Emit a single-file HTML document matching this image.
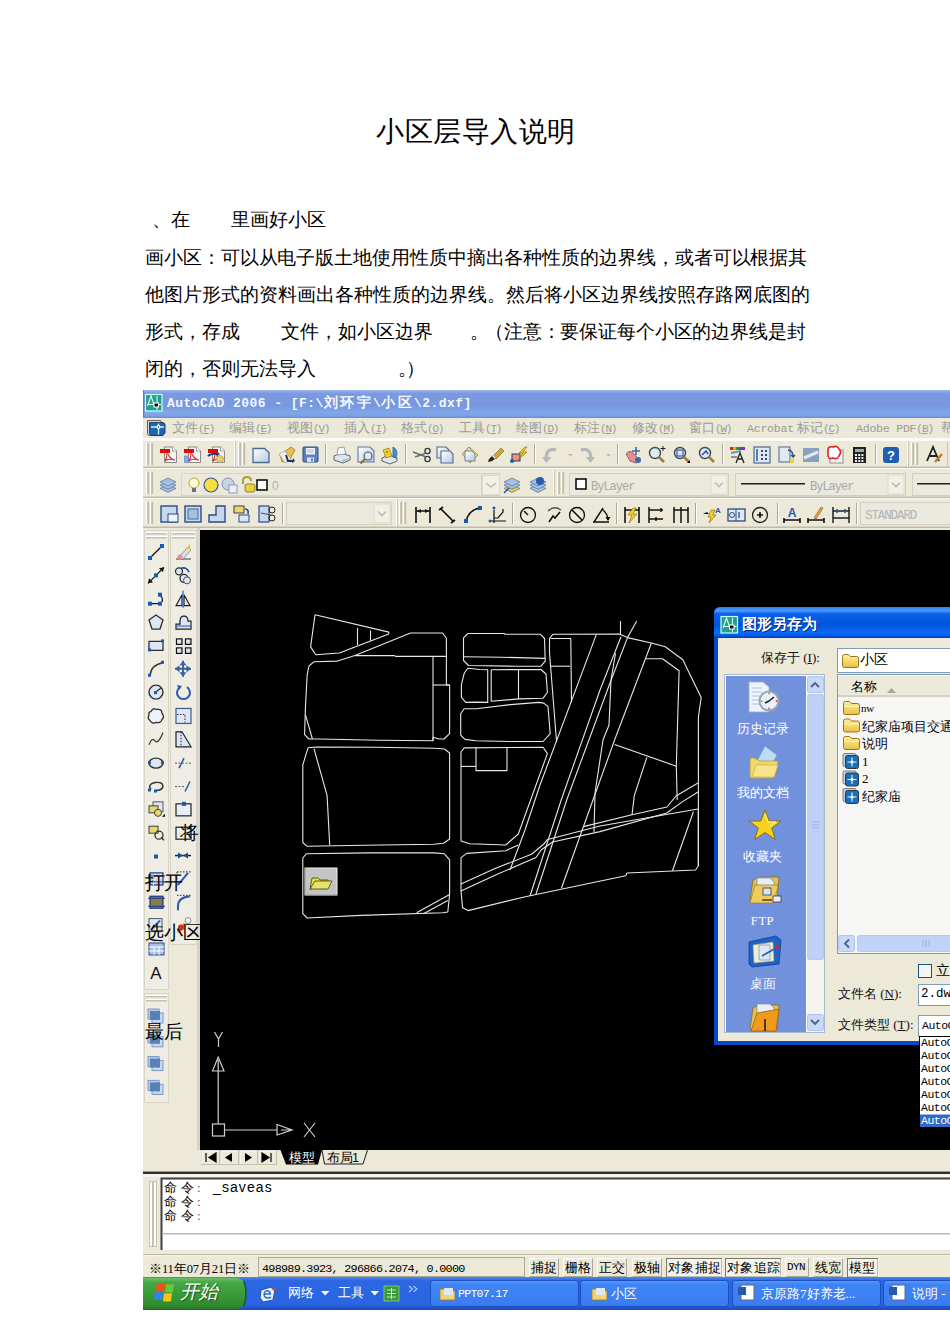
<!DOCTYPE html>
<html><head><meta charset="utf-8">
<style>
*{margin:0;padding:0;box-sizing:border-box}
html,body{width:950px;height:1344px;background:#fff;overflow:hidden;position:relative;font-family:"Liberation Serif",serif}
.t{position:absolute;white-space:nowrap;font-size:18.7px;line-height:20px;color:#000;font-family:"Liberation Serif",serif}
.ui{font-family:"Liberation Sans",sans-serif}
svg{position:absolute;left:0;top:0}
</style></head><body>

<div class="t" style="left:376px;top:118px;font-size:28px;line-height:28px;letter-spacing:.55px">小区层导入说明</div>
<div class="t" style="left:152px;top:210px">、在</div>
<div class="t" style="left:231px;top:210px">里画好小区</div>
<div class="t" style="left:145px;top:248px;letter-spacing:-0.08px">画小区：可以从电子版土地使用性质中摘出各种性质的边界线，或者可以根据其</div>
<div class="t" style="left:145px;top:285px">他图片形式的资料画出各种性质的边界线。然后将小区边界线按照存路网底图的</div>
<div class="t" style="left:145px;top:322px">形式，存成</div>
<div class="t" style="left:281px;top:322px">文件，如小区边界</div>
<div class="t" style="left:470px;top:322px">。</div>
<div class="t" style="left:485px;top:322px;letter-spacing:-.15px">（注意：要保证每个小区的边界线是封</div>
<div class="t" style="left:145px;top:359px">闭的，否则无法导入</div>
<div class="t" style="left:398px;top:359px">。</div>
<div class="t" style="left:406px;top:359px">）</div>

<svg width="950" height="1344" viewBox="0 0 950 1344" shape-rendering="auto">
<rect x="143" y="390" width="807" height="920" fill="#ece9d8" /><defs><linearGradient id="tg" x1="0" y1="0" x2="0" y2="1"><stop offset="0" stop-color="#a3baf0"/><stop offset=".12" stop-color="#7b9ae0"/><stop offset=".55" stop-color="#7797df"/><stop offset=".82" stop-color="#80a8e8"/><stop offset=".92" stop-color="#7aa0e4"/><stop offset="1" stop-color="#6c88d6"/></linearGradient><linearGradient id="dg" x1="0" y1="0" x2="0" y2="31" gradientUnits="userSpaceOnUse" gradientTransform="translate(0 607)"><stop offset="0" stop-color="#2f80f4"/><stop offset=".12" stop-color="#4a98ff"/><stop offset=".22" stop-color="#0a60e8"/><stop offset=".6" stop-color="#0054dc"/><stop offset=".82" stop-color="#0a6cfa"/><stop offset=".93" stop-color="#0058e8"/><stop offset="1" stop-color="#0a3a9a"/></linearGradient><linearGradient id="tk" x1="0" y1="0" x2="0" y2="1"><stop offset="0" stop-color="#4a88f4"/><stop offset=".1" stop-color="#2d68e2"/><stop offset=".85" stop-color="#2a64e0"/><stop offset="1" stop-color="#1c48b8"/></linearGradient><linearGradient id="st" x1="0" y1="0" x2="0" y2="1"><stop offset="0" stop-color="#6cc06c"/><stop offset=".15" stop-color="#44a844"/><stop offset=".5" stop-color="#3a9c3a"/><stop offset=".85" stop-color="#2f8c2f"/><stop offset="1" stop-color="#2a7a2a"/></linearGradient><linearGradient id="fold" x1="0" y1="0" x2="0" y2="1"><stop offset="0" stop-color="#fff0a0"/><stop offset="1" stop-color="#e8c040"/></linearGradient><linearGradient id="pg" x1="0" y1="0" x2="1" y2="1"><stop offset="0" stop-color="#ffffff"/><stop offset="1" stop-color="#b8c8dc"/></linearGradient><linearGradient id="tbtn" x1="0" y1="0" x2="0" y2="1"><stop offset="0" stop-color="#5a9cfc"/><stop offset=".15" stop-color="#3f84f5"/><stop offset="1" stop-color="#3a7cf0"/></linearGradient></defs><rect x="143" y="390" width="807" height="28" fill="url(#tg)" /><rect x="145.5" y="394.5" width="16.5" height="16.5" fill="#22a08e" stroke="#c8fff4" stroke-width="1.2"/><path d="M147.5 406 l3.5 -10 l3.5 10 M157 396 v14 M148 404.5 h13" fill="none" stroke="#dafff6" stroke-width="1.1"/><rect x="154" y="403" width="4.5" height="4" fill="#101010" stroke="#fff" stroke-width="1"/><rect x="143" y="390" width="1.2" height="28" fill="#6a7ab8" /><rect x="143" y="418" width="807" height="20" fill="#ebe8d8" /><rect x="143" y="438" width="807" height="2" fill="#fbfaf4" /><path d="M147.5 420.5 h13 l1 2 v11 q0 2 -2 2 h-10 q-2 0 -2 -2z" fill="#d8d8d8" stroke="#505050" stroke-width=".9"/><path d="M149.5 422.5 h14 l1.5 1.5 v9 l-2 2.5 h-11 q-2.5 0 -2.5 -2.5z" fill="#1f64b0" stroke="#203a60" stroke-width=".9"/><path d="M158.5 423.5v11M151 427h13" stroke="#c8f4ff" stroke-width="1.3"/><circle cx="158.5" cy="427" r="2" fill="#fff"/><circle cx="158.5" cy="427" r=".7" fill="#000"/><rect x="143" y="440" width="807" height="28" fill="#ece9d8" /><rect x="143" y="440" width="807" height="1" fill="#fbfaf6" /><rect x="143" y="466" width="807" height="1" fill="#d6d3c2" /><rect x="143" y="467" width="807" height="1" fill="#bdbaa8" /><rect x="143" y="468" width="807" height="30" fill="#ece9d8" /><rect x="143" y="468" width="807" height="1" fill="#fbfaf6" /><rect x="143" y="496" width="807" height="1" fill="#d6d3c2" /><rect x="143" y="497" width="807" height="1" fill="#bdbaa8" /><rect x="143" y="498" width="807" height="30" fill="#ece9d8" /><rect x="143" y="498" width="807" height="1" fill="#fbfaf6" /><rect x="143" y="526" width="807" height="1" fill="#d6d3c2" /><rect x="143" y="527" width="807" height="1" fill="#bdbaa8" /><rect x="146" y="443" width="1.2" height="22" fill="#fff" /><rect x="147.2" y="443" width="2" height="22" fill="#c0bdac" /><rect x="150" y="443" width="1.2" height="22" fill="#fff" /><rect x="151.2" y="443" width="2" height="22" fill="#c0bdac" /><path d="M164.5 447h8l4 4v11.5h-12z" fill="#f4f4f4" stroke="#8a8a8a" stroke-width="1"/><path d="M172.5 447v4h4" fill="#fff" stroke="#8a8a8a" stroke-width=".8"/><rect x="160" y="449" width="10" height="4" fill="#e00a0a" /><path d="M167 453 q0 5 -2 8 q3 -3 10 -1 q-5 -1 -7 -6" fill="none" stroke="#e02828" stroke-width="1.1"/><path d="M188.5 447h8l4 4v11.5h-12z" fill="#f4f4f4" stroke="#8a8a8a" stroke-width="1"/><path d="M196.5 447v4h4" fill="#fff" stroke="#8a8a8a" stroke-width=".8"/><rect x="184" y="449" width="10" height="4" fill="#e00a0a" /><path d="M191 453 q0 5 -2 8 q3 -3 10 -1 q-5 -1 -7 -6" fill="none" stroke="#e02828" stroke-width="1.1"/><rect x="184.5" y="456" width="4" height="6.5" fill="#86a8e8" /><rect x="184.5" y="456" width="4" height="6.5" fill="none" stroke="#5a7ac0" stroke-width=".6"/><path d="M212.5 447h8l4 4v11.5h-12z" fill="#f4f4f4" stroke="#8a8a8a" stroke-width="1"/><path d="M220.5 447v4h4" fill="#fff" stroke="#8a8a8a" stroke-width=".8"/><rect x="208" y="449" width="10" height="4" fill="#e00a0a" /><path d="M215 453 q0 5 -2 8 q3 -3 10 -1 q-5 -1 -7 -6" fill="none" stroke="#e02828" stroke-width="1.1"/><path d="M208 456 q3 -3 9 -2" fill="none" stroke="#1a3a90" stroke-width="2.2"/><path d="M217 452 l3 2 l-3 2z" fill="#1a3a90"/><circle cx="220" cy="459" r="3.5" fill="#e8d070" stroke="#a09050" stroke-width=".6"/><rect x="234" y="441" width="1" height="26" fill="#fff" /><rect x="235" y="441" width="1" height="26" fill="#c8c5b4" /><rect x="238" y="443" width="1.2" height="22" fill="#fff" /><rect x="239.2" y="443" width="2" height="22" fill="#c0bdac" /><rect x="242" y="443" width="1.2" height="22" fill="#fff" /><rect x="243.2" y="443" width="2" height="22" fill="#c0bdac" /><path d="M253 448.5h11.5l4.5 4v10h-16z" fill="url(#pg)" stroke="#4a6a9a" stroke-width="1.3"/><path d="M280 455 l11 -8 l4 3 l-6 11 l-7 1z" fill="#e8c050" stroke="#9a7a30" stroke-width=".8"/><path d="M279 454 l6 -3 l6 8 l-6 4z" fill="#f4f0e0" stroke="#a09070" stroke-width=".6"/><path d="M286 455 l2 6 l5 0" fill="none" stroke="#1a3070" stroke-width="2"/><path d="M293 458 l2 3 l-3 2z" fill="#1a3070"/><rect x="303" y="447" width="15" height="15" rx="1" fill="#5a82c0" stroke="#2e4e88" stroke-width="1"/><rect x="306" y="448" width="9" height="6.5" fill="#eef2fa" /><path d="M307 450h7M307 452h7" stroke="#9ab0d0" stroke-width=".8"/><rect x="307" y="457.5" width="7" height="4.5" fill="#dde4f0" /><rect x="311" y="458.5" width="2" height="3" fill="#5a82c0" /><rect x="325" y="444" width="1" height="20" fill="#aca899" /><rect x="326" y="444" width="1" height="20" fill="#fff" /><path d="M334 456 l7 -3 l9 3 v4 l-7 3 l-9 -3z" fill="#dfe6ee" stroke="#56657a" stroke-width="1"/><path d="M337 455 l1 -7 l6 -1 l2 7z" fill="#f8f8f8" stroke="#8090a0" stroke-width=".8"/><path d="M342 461 l6 -2" stroke="#a8b8c8" stroke-width="1.5"/><path d="M358 447h12l4 4v11h-16z" fill="url(#pg)" stroke="#5a7aa8" stroke-width="1.1"/><circle cx="368" cy="456" r="4" fill="#dce8f4" stroke="#4a5a6a" stroke-width="1.2"/><path d="M365 459 l-4.5 4.5" stroke="#8a6a30" stroke-width="1.8"/><path d="M382 458 l7 -3 l8 3 v3 l-7 3 l-8 -3z" fill="#dfe6ee" stroke="#56657a" stroke-width="1"/><path d="M383 450 l6 -2 l3 8 l-6 2z" fill="#f0d030" stroke="#a08020" stroke-width=".8"/><path d="M393 447 q6 3 3 11 l-3 -1z" fill="#4a90c8" stroke="#205880" stroke-width=".7"/><circle cx="387" cy="452" r=".8" fill="#604000"/><rect x="405" y="444" width="1" height="20" fill="#aca899" /><rect x="406" y="444" width="1" height="20" fill="#fff" /><circle cx="427.5" cy="451" r="2.6" fill="none" stroke="#303840" stroke-width="1.3"/><circle cx="427.5" cy="459" r="2.6" fill="none" stroke="#303840" stroke-width="1.3"/><path d="M413 452 l12 4.5 M415 457 l10 -3.5" stroke="#687078" stroke-width="1.4"/><path d="M437 447h9l3 3v8h-12z" fill="url(#pg)" stroke="#4a6a9a" stroke-width="1.1"/><path d="M441 451h9l3 3v9h-12z" fill="url(#pg)" stroke="#4a6a9a" stroke-width="1.1"/><path d="M462 454 l7 -7 l9 8 l-8 8z" fill="#e8d890" stroke="#b09838" stroke-width="1"/><path d="M465 451h7l3 3v7h-10z" fill="url(#pg)" stroke="#5a7aa8" stroke-width=".9"/><path d="M467 449 l2 -2 l2 2" fill="none" stroke="#808080"/><path d="M488 462 q1 -4 4 -6 l3 3 q-3 3 -7 3z" fill="#202428"/><path d="M493 456 l8 -8 l3 3 l-8 8z" fill="#d0a830" stroke="#706020" stroke-width=".6"/><path d="M495 458 l-3 -3" stroke="#e0e0e0" stroke-width="1.2"/><rect x="512" y="454" width="8" height="7" fill="#e8968a" stroke="#303848" stroke-width="1"/><circle cx="512" cy="461" r="2" fill="#1a5ab0"/><path d="M525 447 l-6 6 h4 l-5 7 l9 -8 h-4 l4 -5z" fill="#f0d020" stroke="#806000" stroke-width=".6"/><rect x="534" y="444" width="1" height="20" fill="#aca899" /><rect x="535" y="444" width="1" height="20" fill="#fff" /><path d="M556 450 q-9 -3 -10 8" fill="none" stroke="#b4b8bc" stroke-width="3.2"/><path d="M542 457 h9 l-4.5 6z" fill="#b4b8bc"/><path d="M568 454 h5 l-2.5 2.5z" fill="#b8b8b8"/><path d="M581 450 q9 -3 10 8" fill="none" stroke="#b4b8bc" stroke-width="3.2"/><path d="M595 457 h-9 l4.5 6z" fill="#b4b8bc"/><path d="M606 454 h5 l-2.5 2.5z" fill="#b8b8b8"/><rect x="617" y="444" width="1" height="20" fill="#aca899" /><rect x="618" y="444" width="1" height="20" fill="#fff" /><path d="M626 454 q2 -4 6 -2 l6 6 q2 4 -2 5 l-6 -2z" fill="#e09090" stroke="#804040" stroke-width=".7"/><path d="M636 447v8M632 451h8" stroke="#3a6ab0" stroke-width="1.6"/><circle cx="638" cy="460" r="3" fill="#3a6ab0"/><circle cx="655" cy="453" r="5.5" fill="#dfe8f4" stroke="#404850" stroke-width="1.4"/><path d="M659 457 l5 5" stroke="#a08030" stroke-width="2.5"/><path d="M663 446v5M660.5 448.5h5" stroke="#202020" stroke-width="1"/><circle cx="680" cy="453" r="5.5" fill="#dfe8f4" stroke="#404850" stroke-width="1.4"/><path d="M684 457 l5 5" stroke="#a08030" stroke-width="2.5"/><rect x="677" y="450" width="6" height="6" fill="none" stroke="#2a5ab0" stroke-width="1.2"/><path d="M687 463 l3 -3 v3z" fill="#000"/><circle cx="705" cy="453" r="5.5" fill="#dfe8f4" stroke="#404850" stroke-width="1.4"/><path d="M709 457 l5 5" stroke="#a08030" stroke-width="2.5"/><path d="M702 455 l4 -4 l2 3" fill="none" stroke="#2a5ab0" stroke-width="1.6"/><rect x="722" y="444" width="1" height="20" fill="#aca899" /><rect x="723" y="444" width="1" height="20" fill="#fff" /><rect x="730" y="447" width="3" height="3" fill="#e02020" /><rect x="733" y="447" width="3" height="3" fill="#f0a000" /><rect x="736" y="447" width="3" height="3" fill="#20a020" /><rect x="739" y="447" width="3" height="3" fill="#2060e0" /><rect x="742" y="447" width="3" height="3" fill="#a020c0" /><path d="M731 453 l10 -2 M731 457 h6" stroke="#8090a0" stroke-width="2"/><path d="M736 463 l4 -10 l4 10 M738 459h4" fill="none" stroke="#202020" stroke-width="1.3"/><rect x="754" y="447" width="16" height="16" fill="#e0e8f0" stroke="#4a6a90" stroke-width="1.2"/><rect x="756" y="449" width="2" height="12" fill="#5a80b0" /><rect x="761" y="450" width="2" height="2" fill="#2a4a88" /><rect x="765" y="450" width="2" height="2" fill="#2a4a88" /><rect x="761" y="454" width="2" height="2" fill="#2a4a88" /><rect x="765" y="454" width="2" height="2" fill="#2a4a88" /><rect x="761" y="458" width="2" height="2" fill="#2a4a88" /><rect x="765" y="458" width="2" height="2" fill="#2a4a88" /><rect x="779" y="447" width="11" height="15" fill="#e0e8f0" stroke="#4a6a90"/><path d="M788 450 q5 0 5 7 l-2 -2 m2 2 l2 -2" fill="none" stroke="#2a4a88" stroke-width="1.3"/><rect x="790" y="459" width="4" height="4" fill="#f0d040" /><rect x="803" y="448" width="16" height="14" fill="#8aa0c0"/><path d="M804 458 l14 -6" stroke="#e0e8f0" stroke-width="3"/><rect x="830" y="450" width="13" height="13" fill="#f0f0f0" stroke="#909090"/><path d="M828 450 q0 -4 5 -3 q4 -2 6 2 q3 3 0 7 q-2 4 -6 2 q-5 2 -5 -3z" fill="#fff" stroke="#e02020" stroke-width="1.6"/><rect x="853" y="447" width="13" height="16" fill="#202020"/><rect x="855" y="449" width="9" height="3" fill="#90b890" /><rect x="855.0" y="454" width="2" height="2" fill="#f0f0f0" /><rect x="858.2" y="454" width="2" height="2" fill="#f0f0f0" /><rect x="861.4" y="454" width="2" height="2" fill="#f0f0f0" /><rect x="855.0" y="457" width="2" height="2" fill="#f0f0f0" /><rect x="858.2" y="457" width="2" height="2" fill="#f0f0f0" /><rect x="861.4" y="457" width="2" height="2" fill="#f0f0f0" /><rect x="855.0" y="460" width="2" height="2" fill="#f0f0f0" /><rect x="858.2" y="460" width="2" height="2" fill="#f0f0f0" /><rect x="861.4" y="460" width="2" height="2" fill="#f0f0f0" /><rect x="875" y="444" width="1" height="20" fill="#aca899" /><rect x="876" y="444" width="1" height="20" fill="#fff" /><rect x="883" y="447" width="16" height="16" rx="3" fill="#1f5fb0"/><text x="891" y="460" font-size="13" font-weight="bold" fill="#fff" text-anchor="middle" font-family="Liberation Sans">?</text><rect x="907" y="441" width="1" height="26" fill="#fff" /><rect x="908" y="441" width="1" height="26" fill="#c8c5b4" /><rect x="911" y="443" width="1.2" height="22" fill="#fff" /><rect x="912.2" y="443" width="2" height="22" fill="#c0bdac" /><rect x="915" y="443" width="1.2" height="22" fill="#fff" /><rect x="916.2" y="443" width="2" height="22" fill="#c0bdac" /><path d="M927 461 l6 -14 l6 14 M930 456h6" fill="none" stroke="#202020" stroke-width="1.8"/><path d="M935 462 l7 -8" stroke="#c08020" stroke-width="2.4"/><rect x="947" y="442" width="1" height="24" fill="#c8c5b4" /><rect x="146" y="472" width="1.2" height="22" fill="#fff" /><rect x="147.2" y="472" width="2" height="22" fill="#c0bdac" /><rect x="150" y="472" width="1.2" height="22" fill="#fff" /><rect x="151.2" y="472" width="2" height="22" fill="#c0bdac" /><path d="M160 488.4 l8 -4 l8 4 l-8 4z" fill="#a8c0e0" stroke="#5a7aa8" stroke-width=".8"/><path d="M160 485.2 l8 -4 l8 4 l-8 4z" fill="#a8c0e0" stroke="#5a7aa8" stroke-width=".8"/><path d="M160 482.0 l8 -4 l8 4 l-8 4z" fill="#a8c0e0" stroke="#5a7aa8" stroke-width=".8"/><rect x="181.5" y="473.5" width="318" height="22" fill="#ebe9de" stroke="#d4d0c0"/><rect x="482" y="475" width="16" height="19" fill="#f1efe6" stroke="#dddacb"/><path d="M486 482.5 l4 4 l4 -4" fill="none" stroke="#c0bdb0" stroke-width="1.6"/><rect x="181.5" y="473.5" width="300" height="22" fill="#ebe9de" stroke="#d8d4c4"/><circle cx="194" cy="483" r="5" fill="#fffbd0" stroke="#c0a040"/><rect x="192" y="488" width="4" height="4" fill="#707070" /><circle cx="211" cy="485" r="7" fill="#f4e040" stroke="#3a5a90" stroke-width="1.2"/><circle cx="228" cy="484" r="6" fill="#c8d4e4" stroke="#8090b0"/><rect x="229" y="485" width="8" height="8" fill="#eef" stroke="#8a9ab0"/><path d="M243 484 v-3 q0 -4 4 -4 q4 0 4 4" fill="none" stroke="#b0a020" stroke-width="2"/><rect x="245" y="484" width="10" height="8" rx="2" fill="#e8d040" stroke="#908020"/><rect x="257" y="480" width="10" height="10" fill="#fff" stroke="#000" stroke-width="1.5"/><text x="272" y="490" font-size="12" fill="#b0b0b0" font-family="Liberation Sans">0</text><rect x="482.5" y="475.5" width="17" height="19" fill="#f1efe6" stroke="#dddacb"/><path d="M486 483 l5 4 l5 -4" fill="none" stroke="#c0bdb0" stroke-width="1.6"/><path d="M504 488.4 l8 -4 l8 4 l-8 4z" fill="#f0d020" stroke="#5a7aa8" stroke-width=".8"/><path d="M504 485.2 l8 -4 l8 4 l-8 4z" fill="#a8c0e0" stroke="#5a7aa8" stroke-width=".8"/><path d="M504 482.0 l8 -4 l8 4 l-8 4z" fill="#a8c0e0" stroke="#5a7aa8" stroke-width=".8"/><path d="M504 493 l5 -5" stroke="#2050b0" stroke-width="1.5"/><path d="M530 488.4 l8 -4 l8 4 l-8 4z" fill="#a8c0e0" stroke="#5a7aa8" stroke-width=".8"/><path d="M530 485.2 l8 -4 l8 4 l-8 4z" fill="#a8c0e0" stroke="#5a7aa8" stroke-width=".8"/><path d="M530 482.0 l8 -4 l8 4 l-8 4z" fill="#a8c0e0" stroke="#5a7aa8" stroke-width=".8"/><circle cx="540" cy="481" r="4" fill="#2a5ab0"/><rect x="553" y="470" width="1" height="26" fill="#fff" /><rect x="554" y="470" width="1" height="26" fill="#c8c5b4" /><rect x="557" y="472" width="1.2" height="22" fill="#fff" /><rect x="558.2" y="472" width="2" height="22" fill="#c0bdac" /><rect x="561" y="472" width="1.2" height="22" fill="#fff" /><rect x="562.2" y="472" width="2" height="22" fill="#c0bdac" /><rect x="569.5" y="473.5" width="159" height="22" fill="#ebe9de" stroke="#d4d0c0"/><rect x="711" y="475" width="16" height="19" fill="#f1efe6" stroke="#dddacb"/><path d="M715 482.5 l4 4 l4 -4" fill="none" stroke="#c0bdb0" stroke-width="1.6"/><rect x="576" y="479" width="10" height="10" fill="#fff" stroke="#000" stroke-width="1.5"/><text x="591" y="489.5" font-size="12" fill="#a8a8a8" font-family="Liberation Mono" letter-spacing="-1">ByLayer</text><rect x="735.5" y="473.5" width="170" height="22" fill="#ebe9de" stroke="#d4d0c0"/><rect x="888" y="475" width="16" height="19" fill="#f1efe6" stroke="#dddacb"/><path d="M892 482.5 l4 4 l4 -4" fill="none" stroke="#c0bdb0" stroke-width="1.6"/><rect x="741" y="483" width="64" height="1.5" fill="#202020" /><text x="810" y="489.5" font-size="12" fill="#a8a8a8" font-family="Liberation Mono" letter-spacing="-1">ByLayer</text><rect x="912.5" y="473.5" width="59" height="22" fill="#ebe9de" stroke="#d4d0c0"/><rect x="917" y="483" width="40" height="1.5" fill="#202020" /><rect x="146" y="502" width="1.2" height="22" fill="#fff" /><rect x="147.2" y="502" width="2" height="22" fill="#c0bdac" /><rect x="150" y="502" width="1.2" height="22" fill="#fff" /><rect x="151.2" y="502" width="2" height="22" fill="#c0bdac" /><rect x="161" y="506" width="16" height="16" fill="#c8d8ec" stroke="#2a4a88" stroke-width="1.4"/><rect x="168" y="514" width="10" height="8" fill="#f0f4fa" /><rect x="168" y="514" width="10" height="8" fill="none" stroke="#2a4a88"/><rect x="185" y="506" width="16" height="16" fill="#c8d8ec" stroke="#2a4a88" stroke-width="1.4"/><rect x="188" y="509" width="10" height="10" fill="#a8c0e0" stroke="#4a6a98"/><path d="M209 515 h7 v-9 h9 v16 h-16z" fill="#c8d8ec" stroke="#2a4a88" stroke-width="1.4"/><rect x="234" y="506" width="10" height="7" fill="#e8d870" /><rect x="234" y="506" width="10" height="7" fill="none" stroke="#404040"/><rect x="239" y="515" width="10" height="7" fill="#dde6f2" stroke="#2a4a88"/><path d="M245 509 q4 0 3 5" fill="none" stroke="#2a4a88" stroke-width="1.6"/><rect x="259" y="506" width="10" height="16" fill="#c8d8ec" stroke="#2a4a88" stroke-width="1.2"/><circle cx="272" cy="510" r="3" fill="none" stroke="#202020"/><circle cx="272" cy="518" r="3" fill="none" stroke="#202020"/><path d="M261 513 l10 2" stroke="#505050"/><rect x="282" y="503" width="1" height="21" fill="#aca899" /><rect x="283" y="503" width="1" height="21" fill="#fff" /><rect x="286.5" y="502.5" width="105" height="22" fill="#ebe9de" stroke="#d4d0c0"/><rect x="374" y="504" width="16" height="19" fill="#f1efe6" stroke="#dddacb"/><path d="M378 511.5 l4 4 l4 -4" fill="none" stroke="#c0bdb0" stroke-width="1.6"/><rect x="396" y="500" width="1" height="26" fill="#fff" /><rect x="397" y="500" width="1" height="26" fill="#c8c5b4" /><rect x="399" y="502" width="1.2" height="22" fill="#fff" /><rect x="400.2" y="502" width="2" height="22" fill="#c0bdac" /><rect x="403" y="502" width="1.2" height="22" fill="#fff" /><rect x="404.2" y="502" width="2" height="22" fill="#c0bdac" /><path d="M416 507v16M430 507v16M416 511h14" fill="none" stroke="#101010" stroke-width="1.6"/><path d="M417 511 l4 -2 v4z M429 511 l-4 -2 v4z" fill="#101010"/><path d="M439 510 l4 -3 M451 523 l4 -3 M441 509 l12 12" fill="none" stroke="#101010" stroke-width="1.7"/><path d="M466 522 q2 -12 14 -14" fill="none" stroke="#101010" stroke-width="1.5"/><rect x="464" y="519" width="4" height="4" fill="#1a5ab0" /><rect x="478" y="506" width="4" height="4" fill="#1a5ab0" /><path d="M494 510v13M491 521h15M494 518 h4 l5 -6 v-3" fill="none" stroke="#101010" stroke-width="1.2"/><circle cx="494" cy="508" r="1.5" fill="#1a5ab0"/><circle cx="490" cy="521" r="1.5" fill="#1a5ab0"/><rect x="512" y="503" width="1" height="21" fill="#aca899" /><rect x="513" y="503" width="1" height="21" fill="#fff" /><circle cx="528" cy="515" r="7.5" fill="none" stroke="#101010" stroke-width="1.3"/><path d="M528 515 l-4 -4" stroke="#101010" stroke-width="1.5"/><path d="M549 522 l4 -6 l2 2 l5 -6" fill="none" stroke="#101010" stroke-width="1.6"/><path d="M548 511 q6 -6 13 -1" fill="none" stroke="#505050" stroke-width="1.3"/><circle cx="577" cy="515" r="7.5" fill="none" stroke="#101010" stroke-width="1.3"/><path d="M572 510 l10 10" stroke="#101010" stroke-width="1.6"/><path d="M593 522h16M594 522 l9 -14 M602 509 q6 5 6 11" fill="none" stroke="#101010" stroke-width="1.4"/><path d="M608 521 l-2.5 -4 h5z" fill="#101010"/><rect x="616" y="503" width="1" height="21" fill="#aca899" /><rect x="617" y="503" width="1" height="21" fill="#fff" /><path d="M625 507v16M639 507v16M625 510h14" stroke="#101010" stroke-width="1.6"/><path d="M633 508 l-5 7 h4 l-3 8 l8 -9 h-4 l3 -6z" fill="#f0d020" stroke="#705000" stroke-width=".5"/><path d="M649 507v16M649 510h14M649 519h14M661 508v4M656 517v4" fill="none" stroke="#101010" stroke-width="1.5"/><path d="M674 507v16M681 507v16M688 507v16M674 510h14" fill="none" stroke="#101010" stroke-width="1.5"/><rect x="695" y="503" width="1" height="21" fill="#aca899" /><rect x="696" y="503" width="1" height="21" fill="#fff" /><path d="M703 514 l4 -2 l2 2z" fill="#101010"/><path d="M711 510 l-3 7 h3 l-2 6 l7 -8 h-3 l2 -5z" fill="#f0d020" stroke="#705000" stroke-width=".5"/><text x="715" y="513" font-size="8" fill="#1a5ab0" font-family="Liberation Sans" font-weight="bold">A</text><rect x="728" y="509" width="17" height="12" fill="#e0e8f4" stroke="#2a4a88" stroke-width="1.3"/><path d="M736 509v12" stroke="#2a4a88"/><circle cx="732" cy="515" r="2.5" fill="none" stroke="#2a4a88"/><path d="M739 512v6" stroke="#2a4a88" stroke-width="1.3"/><circle cx="760" cy="515" r="7.5" fill="none" stroke="#202020" stroke-width="1.3"/><path d="M757 515h6M760 512v6" stroke="#101010" stroke-width="1.6"/><rect x="777" y="503" width="1" height="21" fill="#aca899" /><rect x="778" y="503" width="1" height="21" fill="#fff" /><text x="792" y="517" font-size="12" font-weight="bold" fill="#1a5ab0" text-anchor="middle" font-family="Liberation Sans">A</text><path d="M784 520h16M784 518v5M800 518v5" stroke="#101010" stroke-width="1.6"/><path d="M808 520h16M808 518v5M824 518v5" stroke="#101010" stroke-width="1.6"/><path d="M814 518 l7 -11 l2 1 l-7 11z" fill="#f0a040" stroke="#805020" stroke-width=".6"/><path d="M833 507v16M849 507v16M833 511h16M833 518h16" fill="none" stroke="#202020" stroke-width="1.5"/><path d="M837 509v4M845 509v4" stroke="#1a5ab0" stroke-width="1.5"/><rect x="856" y="503" width="1" height="21" fill="#aca899" /><rect x="857" y="503" width="1" height="21" fill="#fff" /><rect x="860.5" y="502.5" width="99" height="22" fill="#ebe9de" stroke="#d4d0c0"/><text x="865" y="519" font-size="12.5" fill="#b4b4b4" font-family="Liberation Mono" letter-spacing="-1.1">STANDARD</text><rect x="143" y="528" width="57" height="622" fill="#ece9d8" /><rect x="144.5" y="530.5" width="24" height="459" fill="#efede3" stroke="#d8d5c5"/><rect x="170.5" y="530.5" width="26" height="414" fill="#efede3" stroke="#d8d5c5"/><rect x="146" y="532" width="21" height="1" fill="#fff" /><rect x="146" y="533" width="21" height="1.5" fill="#c4c1b0" /><rect x="146" y="536" width="21" height="1" fill="#fff" /><rect x="146" y="537" width="21" height="1.5" fill="#c4c1b0" /><rect x="172" y="532" width="23" height="1" fill="#fff" /><rect x="172" y="533" width="23" height="1.5" fill="#c4c1b0" /><rect x="172" y="536" width="23" height="1" fill="#fff" /><rect x="172" y="537" width="23" height="1.5" fill="#c4c1b0" /><rect x="197" y="528" width="3" height="622" fill="#d8d5c5" /><path d="M150 558.0 L162 546.0" stroke="#101010" stroke-width="1.3"/><rect x="148" y="556.0" width="4" height="4" fill="#1a5ab0" /><rect x="160" y="544.0" width="4" height="4" fill="#1a5ab0" /><path d="M148 583.35 L164 567.35" stroke="#101010" stroke-width="1.3"/><path d="M148 583.35 l1 -5 l4 4z M164 567.35 l-1 5 l-4 -4z" fill="#101010"/><rect x="154" y="573.35" width="4" height="4" fill="#1a5ab0" /><path d="M149 603.7 h11 q5 -3 0 -9" fill="none" stroke="#101010" stroke-width="1.3"/><rect x="148" y="601.7" width="4" height="4" fill="#1a5ab0" /><rect x="158" y="601.7" width="4" height="4" fill="#1a5ab0" /><rect x="158" y="592.7" width="4" height="4" fill="#1a5ab0" /><path d="M156 615.05 l7 5 l-3 9 h-8 l-3 -9z" fill="#dde6f2" stroke="#303030" stroke-width="1.3"/><path d="M149 641.4 h14 v9 h-14z" fill="#dde6f2" stroke="#303030" stroke-width="1.3"/><rect x="148" y="648.4" width="3" height="3" fill="#1a5ab0" /><rect x="161" y="639.4" width="3" height="3" fill="#1a5ab0" /><path d="M150 675.75 q1 -11 13 -13" fill="none" stroke="#303030" stroke-width="1.5"/><rect x="148" y="673.75" width="3" height="3" fill="#1a5ab0" /><rect x="161" y="660.75" width="3" height="3" fill="#1a5ab0" /><circle cx="156" cy="692.1" r="7" fill="#dde6f2" stroke="#303030" stroke-width="1.4"/><path d="M156 692.1 l5 -4" stroke="#303030" stroke-width="1.3"/><rect x="154" y="691.1" width="3" height="3" fill="#1a5ab0" /><path d="M151 711.45 q2 -4 6 -2 q5 -1 5 4 q3 3 0 6 q-1 4 -6 3 q-4 2 -6 -2 q-3 -2 -1 -5 q-1 -3 2 -4z" fill="#eef2f8" stroke="#303030" stroke-width="1.3"/><path d="M149 744.8 q3 -8 6 -4 q3 4 8 -8" fill="none" stroke="#404040" stroke-width="1.3"/><ellipse cx="156" cy="763.15" rx="7" ry="5" fill="#dde6f2" stroke="#303030" stroke-width="1.4"/><rect x="148" y="761.15" width="3" height="3" fill="#1a5ab0" /><rect x="161" y="761.15" width="3" height="3" fill="#1a5ab0" /><path d="M151 789.5 q-4 -5 4 -7 q8 -1 8 4 q-1 4 -7 4" fill="none" stroke="#303030" stroke-width="1.4"/><rect x="148" y="788.5" width="3" height="3" fill="#1a5ab0" /><rect x="154" y="789.5" width="3" height="3" fill="#1a5ab0" /><rect x="153" y="801.85" width="10" height="10" fill="#dde6f2" stroke="#505860"/><rect x="149" y="805.85" width="9" height="7" fill="#e8d870" stroke="#404040"/><circle cx="158" cy="812.85" r="3.5" fill="#e8d870" stroke="#404040"/><path d="M162 816.85 l3 -3 v3z" fill="#000"/><rect x="149" y="826.2" width="9" height="7" fill="#e8d870" stroke="#404040"/><circle cx="159" cy="835.2" r="4" fill="none" stroke="#303030" stroke-width="1.3"/><path d="M161 837.2 l3 3" stroke="#303030" stroke-width="1.4"/><rect x="154" y="854.55" width="4" height="4" fill="#1a5ab0" /><rect x="150" y="872.9000000000001" width="13" height="12" fill="#c8d4e4" stroke="#1a3a80" stroke-width="1.2"/><path d="M151 882.9000000000001 l10 -9 M153 884.9000000000001 l9 -8 M150 878.9000000000001 l6 -5" stroke="#fff" stroke-width="1"/><path d="M148 875.9000000000001h17M148 881.9000000000001h17" stroke="#1a3a80"/><rect x="150" y="896.25" width="13" height="12" fill="#8a7a50" stroke="#1a3a80" stroke-width="1.2"/><path d="M148 898.25h17M148 906.25h17" stroke="#1a3a80"/><rect x="149" y="918.6" width="13" height="13" fill="#dde6f2" stroke="#505860"/><path d="M151 929.6 l9 -9" stroke="#2a5ab0" stroke-width="2"/><rect x="149" y="942.95" width="15" height="12" fill="#a8c0e8" stroke="#2a4a90"/><path d="M149 946.95h15M149 950.95h15M154 946.95v8M159 946.95v8" stroke="#fff" stroke-width="1"/><text x="156" y="979.3" font-size="17" fill="#101010" text-anchor="middle" font-family="Liberation Sans">A</text><path d="M176 559.0h15" stroke="#404040"/><path d="M179 557.0 l9 -10 l3 3 l-9 10z" fill="#d8e0e8" stroke="#606060" stroke-width=".6"/><path d="M186 549.0 l4 -5 v5z" fill="#f0c020"/><circle cx="180" cy="557.0" r="2.5" fill="#e09090"/><circle cx="179" cy="571.35" r="3.5" fill="#dde6f2" stroke="#303030" stroke-width="1.3"/><circle cx="184" cy="578.35" r="4" fill="#dde6f2" stroke="#303030" stroke-width="1.3"/><circle cx="187" cy="580.35" r="3.5" fill="#dde6f2" stroke="#505050"/><path d="M181 568.35 q6 -2 8 4" fill="none" stroke="#1a4a90" stroke-width="1.6"/><path d="M176 605.7 l6 -11 v11z M190 605.7 l-6 -11 v11z" fill="#dde6f2" stroke="#202020" stroke-width="1.2"/><path d="M183 590.7v17" stroke="#3a70c0" stroke-width="1.4"/><path d="M176 629.05 v-5 h4 v-3 q0 -5 4 -5 q4 0 4 5 h3 v8z" fill="#dde6f2" stroke="#202020" stroke-width="1.2"/><path d="M176 626.05 h15" stroke="#3a70c0" stroke-width="1.2"/><rect x="176.5" y="638.9" width="5.5" height="5.5" fill="url(#pg)" stroke="#101010" stroke-width="1.2"/><rect x="185.5" y="638.9" width="5.5" height="5.5" fill="url(#pg)" stroke="#101010" stroke-width="1.2"/><rect x="176.5" y="647.9" width="5.5" height="5.5" fill="url(#pg)" stroke="#101010" stroke-width="1.2"/><rect x="185.5" y="647.9" width="5.5" height="5.5" fill="url(#pg)" stroke="#101010" stroke-width="1.2"/><path d="M183 660.75v16M175  668.75h16" stroke="#3a64a0" stroke-width="2"/><path d="M183 660.75 l-3.5 4.5h7z M183 676.75 l-3.5 -4.5h7z M175 668.75 l4.5 -3.5v7z M191 668.75 l-4.5 -3.5v7z" fill="#3a64a0"/><path d="M180 687.1 a6.5 6.5 0 1 0 7 0" fill="none" stroke="#2a5ab0" stroke-width="2"/><path d="M177 685.1 l5 1 l-3 4z" fill="#2a5ab0"/><rect x="176" y="708.45" width="15" height="15" fill="#dde6f2" stroke="#3a5a90" stroke-width="1.2"/><path d="M177 714.45h8v8" fill="none" stroke="#202020" stroke-dasharray="1.5 1.5"/><path d="M176 731.8h6l9 15h-15z" fill="#dde6f2" stroke="#202020" stroke-width="1.2"/><path d="M181 731.8v15" stroke="#202020" stroke-dasharray="1.5 1.5"/><path d="M175 763.15h16" stroke="#606060" stroke-dasharray="2 1.5"/><path d="M179 768.15 l5 -10" stroke="#2a5ab0" stroke-width="1.5"/><path d="M175 786.5h9" stroke="#606060" stroke-dasharray="2 1.5"/><path d="M185 791.5 l5 -10" stroke="#2a5ab0" stroke-width="1.5"/><rect x="176" y="803.85" width="15" height="12" fill="#e8eef6" stroke="#202020" stroke-width="1.2"/><rect x="182" y="801.85" width="4" height="4" fill="#1a5ab0" /><rect x="176" y="827.2" width="15" height="12" fill="#e8eef6" stroke="#202020" stroke-width="1.2"/><path d="M175 855.55h16" stroke="#202020" stroke-width="1.5"/><path d="M183 855.55 l-5 -3v6z M183 855.55 l5 -3v6z" fill="#1a4a90"/><path d="M177 871.9000000000001h14M177 871.9000000000001v15" stroke="#202020" stroke-dasharray="1.5 1.5"/><path d="M178 884.9000000000001 l10 -12" stroke="#2a5ab0" stroke-width="2"/><path d="M177 895.25h14" stroke="#202020" stroke-dasharray="1.5 1.5"/><path d="M178 910.25 v-4 q0 -9 12 -10" fill="none" stroke="#2a5ab0" stroke-width="2"/><path d="M178 932.6 l7 -9" stroke="#e09030" stroke-width="3"/><circle cx="181" cy="927.6" r="3" fill="#d03020"/><circle cx="188" cy="920.6" r="3" fill="#f0f0f0" stroke="#909090"/><rect x="144.5" y="993.5" width="24" height="109" fill="#efede3" stroke="#d8d5c5"/><rect x="146" y="995" width="21" height="1" fill="#fff" /><rect x="146" y="996" width="21" height="1.5" fill="#c4c1b0" /><rect x="146" y="999" width="21" height="1" fill="#fff" /><rect x="146" y="1000" width="21" height="1.5" fill="#c4c1b0" /><rect x="148" y="1009.0" width="11" height="10" fill="#b8cce8" stroke="#7a9ac8"/><rect x="152" y="1013.0" width="11" height="10" fill="#c8d8ee" stroke="#7a9ac8"/><rect x="150" y="1011.0" width="10" height="9" fill="#5a80b8"/><rect x="148" y="1032.8" width="11" height="10" fill="#b8cce8" stroke="#7a9ac8"/><rect x="152" y="1036.8" width="11" height="10" fill="#c8d8ee" stroke="#7a9ac8"/><rect x="150" y="1034.8" width="10" height="9" fill="#5a80b8"/><rect x="148" y="1056.6" width="11" height="10" fill="#b8cce8" stroke="#7a9ac8"/><rect x="152" y="1060.6" width="11" height="10" fill="#c8d8ee" stroke="#7a9ac8"/><rect x="150" y="1058.6" width="10" height="9" fill="#5a80b8"/><rect x="148" y="1080.4" width="11" height="10" fill="#b8cce8" stroke="#7a9ac8"/><rect x="152" y="1084.4" width="11" height="10" fill="#c8d8ee" stroke="#7a9ac8"/><rect x="150" y="1082.4" width="10" height="9" fill="#5a80b8"/><rect x="200" y="530" width="750" height="620" fill="#000" /><g fill="none" stroke="#e8e8e8" stroke-width="1.1" stroke-linejoin="round"><polyline points="315,614.8 388.8,632.1 388.8,633.9 339.3,653 315.8,654.7 310.6,646.9 315,614.8"/><polyline points="357.5,627.8 357.5,645"/><polyline points="370.5,630.4 370.5,640.8"/><polyline points="308.9,666 314.1,661.7 337.5,661.1 354.9,655.6 410.5,633 442.6,633 446.4,638.2 446.4,685 449.6,685 449.6,733.7 444,739 439.2,739 433,737.2 433,740.7 378.4,740.3 319.3,739 308.9,739 304.6,734.6 305.4,707.7 307.2,674.7 308.9,666"/><polyline points="354.9,655.6 394,655.6 396,656.4 446,656.4"/><polyline points="433,656.4 433,740.7"/><polyline points="433,685 449.6,685"/><polyline points="305.4,714.6 312.4,739"/><polyline points="308,747.8 316.7,747 375.8,747.3 434,748.3 444.4,749 449.6,753 449.6,839 443.5,843.3 434,844.2 380,845 307,846.3 302.8,842.5 302.8,765 308,747.8"/><polyline points="314,748.7 327.1,795.6 329.7,845"/><polyline points="306.3,853.8 368,852.9 434,852.9 444.4,853.8 449.6,859.8 449.6,894.6 447.8,912 442.6,912.8 361,915.4 307.2,918 302.8,913.7 302.8,858 306.3,853.8"/><polyline points="416.6,912.8 449.6,894.6"/><polyline points="423.5,913.7 447.8,900.6"/><polyline points="467.8,633.5 504,633.5 504.7,634.2 540.3,634.2 544.5,638.5 545.2,661.2 541,666.2 514.7,666.2 468.5,665.5 463.5,660.5 463.5,637.8 467.8,633.5"/><polyline points="463.5,656.7 501.2,657.2 545.2,658.4"/><polyline points="467.8,668.3 479.9,669.5 487.7,669.7 487.7,702.4 476.3,702.1 465.7,702.4 461.4,697.4 461.4,684.7 464.2,673.3 467.8,668.3"/><polyline points="491.2,669.7 541,669.5 546,674 547.4,692.5 543.1,698.2 519,698.9 491.2,701.3 491.2,669.7"/><polyline points="518.5,669.7 518.5,698.9"/><polyline points="464.2,708.8 476.3,708.8 510.4,704.6 538.8,702.4 543.8,703.1 548,706.7 550.2,733.7 543.1,741.5 510.4,741.5 475.6,740.8 465,739.4 460.7,735.1 460.7,713.8 464.2,708.8"/><polyline points="505.8,845 469.5,843.7 461,841 461,752 464.2,747.9 543.1,747.2 547.4,753.6 518.3,834 505.8,845"/><polyline points="476,747.9 476,770.6 507,770.6 507,747.5"/><polyline points="461,766.4 476,766.4"/><polyline points="553,634.2 619.2,634 627.5,637.6 652.4,643.2 665.3,646.8 682.8,659.7 701.2,697.5 698.4,716.8 698.4,866 695.5,870 627,873 625.7,875.8 525.3,896.7 468,910.6 462.6,907.8 461,891 461,857.6 466.7,853.4 505.8,850.7 518.3,845"/><polyline points="553,634.2 549.5,638.5 549.5,652.7 556.6,742.2"/><polyline points="550.5,638.5 570.8,638.5 571.5,702.4"/><polyline points="551,666.2 570,666.2"/><polyline points="596.2,634.9 540,785 525,830 510,870"/><polyline points="621,636.7 600,690 561.2,800 530,896"/><polyline points="627.5,637.6 610,683 566.7,800 536,894"/><polyline points="636.7,621 627.5,637.6"/><polyline points="620.5,621 620.5,634"/><polyline points="615.5,653.3 611,680 609,725 603,740 595,793 594,832"/><polyline points="614.6,740 582.2,830 561.4,888.2"/><polyline points="651.4,643 614.6,740"/><polyline points="645.9,658.8 662.5,658.8 679.1,670.8 676.3,766.6 677.2,800"/><polyline points="614.6,744.5 676.3,766.2"/><polyline points="646.8,757.4 634.3,795.6 632,815"/><polyline points="693.4,811.8 672.5,870.8"/><polyline points="461,884 495,868.6 531.5,854.2 543.6,844.3 547,839.8 552.5,838.2 600,826 698,809"/><polyline points="461,891 495,875.2 536,857.5 541.4,849.8 552.5,842 600,831.6 666.7,813 683,801.4 698,792"/><polyline points="583.4,826.6 631,815 667,807 676,796 698,783"/><polyline points="698.3,810 698.3,866"/></g><rect x="305" y="868" width="32" height="27" fill="#c4c4c4" stroke="#f0f0f0" stroke-width="1"/><rect x="305" y="868" width="32" height="27" fill="none" stroke="#8a8a8a" stroke-width="1" stroke-dasharray="0 59 59 0"/><path d="M310 889 l2 -11 h6 l2 2 h8 v3 h-12 l-4 6z" fill="#e8e040" stroke="#404000" stroke-width=".8"/><path d="M310 889 l5 -8 h17 l-4 8z" fill="#e8e070" stroke="#404000" stroke-width=".8"/><g fill="none" stroke="#d0d0d0" stroke-width="1.2"><path d="M218.2 1071 V1124"/><path d="M212.5 1071 L218.2 1057 L224 1071z M218.2 1060 v11"/><rect x="212.5" y="1124" width="12" height="12"/><path d="M224.5 1130 H277"/><path d="M277 1124.5 L292 1130 L277 1135z M281 1130 h11"/><path d="M214.5 1032 l4 7 l4 -7 M218.5 1039 v8"/><path d="M304 1123 l11 14 M315 1123 l-11 14"/></g><path d="M714 1045 V614 q0 -7 7 -7 H950 V1045z" fill="#0a50d8"/><path d="M714 638 V614 q0 -7 7 -7 H950 V638z" fill="url(#dg)"/><rect x="714" y="638" width="4" height="407" fill="#0a46c8" /><rect x="714" y="1041" width="236" height="4" fill="#0a46c8" /><rect x="718" y="638" width="232" height="403" fill="#ece9d8" /><rect x="721" y="616.5" width="16.5" height="16.5" fill="#22a08e" stroke="#c8fff4" stroke-width="1.2"/><path d="M723 628 l3.5 -10 l3.5 10 M732.5 618 v14 M723.5 626.5 h13" fill="none" stroke="#dafff6" stroke-width="1.1"/><rect x="729.5" y="625" width="4.5" height="4" fill="#101010" stroke="#fff" stroke-width="1"/><rect x="837.5" y="648.5" width="120" height="24" fill="#fff" stroke="#7f9db9"/><path d="M842.5 665.5 v-9 q0 -2 2 -2 h4 l2 2 h6 q2 0 2 2 v7 q0 2 -2 2 h-12 q-2 0 -2 -2z" fill="url(#fold)" stroke="#9a7418" stroke-width="1"/><rect x="724.5" y="674.5" width="100" height="358" fill="#fff" stroke="#a8b8d0"/><rect x="726" y="676" width="80" height="356" fill="#7191dd" /><rect x="807" y="676" width="17" height="356" fill="#f4f4ee" /><rect x="807.5" y="676.5" width="16" height="16" rx="2" fill="#c8d8f8" stroke="#b0c4ec"/><path d="M811 687 l4 -4 l4 4" fill="none" stroke="#4d6185" stroke-width="1.8"/><rect x="807.5" y="694.5" width="16" height="265" rx="2" fill="#bed0f6" stroke="#b8caf0"/><path d="M812 822h7M812 825h7M812 828h7" stroke="#9fb4e0"/><rect x="807.5" y="1014.5" width="16" height="16" rx="2" fill="#c8d8f8" stroke="#b0c4ec"/><path d="M811 1020 l4 4 l4 -4" fill="none" stroke="#4d6185" stroke-width="1.8"/><path d="M749 682 h14 l6 5 v25 h-20z" fill="#eef4fc" stroke="#9ab0d0" stroke-width=".8"/><path d="M752 688h10M752 692h10M752 696h8M752 700h8M752 704h8" stroke="#a8c0e8" stroke-width="1"/><circle cx="769" cy="701" r="10.5" fill="#9aa4b0"/><circle cx="769" cy="701" r="8.5" fill="#e8f2fc"/><path d="M769 701 l5 -4 M769 701 l-4 2" stroke="#202020" stroke-width="1.6"/><circle cx="769" cy="693.5" r=".9" fill="#e08040"/><circle cx="776.5" cy="701" r=".9" fill="#e04040"/><circle cx="769" cy="708.5" r=".9" fill="#e04040"/><circle cx="761.5" cy="701" r=".9" fill="#e08040"/><path d="M757 761 l8 -15 l12 9 l-7 13z" fill="#bcdcf4" stroke="#7aa0c8" stroke-width=".8"/><path d="M750 760 q0 -3 4 -2 l6 3 h18 l-3 15 q-1 2 -4 2 h-19 q-3 0 -2 -3z" fill="#f0d868" stroke="#c09a30" stroke-width=".8"/><path d="M752 777 l4 -12 h22 l-4 12z" fill="#f8e48a" stroke="#c8a440" stroke-width=".6"/><path d="M765 810 l4.3 11 h11.7 l-9.3 7 l3.6 11.5 l-10.3 -7 l-10.3 7 l3.6 -11.5 l-9.3 -7 h11.7z" fill="#f6d21e" stroke="#8a7010" stroke-width="1"/><path d="M765 814 l3 8 h8 l-6 4" fill="none" stroke="#fff6a0" stroke-width="1"/><path d="M750 901 l3 -21 l6 -3 h20 l-2 24z" fill="#e2bf56" stroke="#8a6a20" stroke-width=".8"/><path d="M757 878 h13 l4 4 v14 h-17z" fill="#e8eef8" stroke="#7a8aa0" stroke-width=".7"/><path d="M750 903 l5 -18 h23 l-4 18z" fill="#f0cc60" stroke="#9a7a28" stroke-width=".7"/><rect x="763" y="888" width="8" height="7" fill="#d8e4f0" stroke="#303a48" stroke-width=".8"/><rect x="773" y="896" width="8" height="6" fill="#e8eef4" stroke="#303a48" stroke-width=".8"/><path d="M762 900 h10" stroke="#202020" stroke-width="1.2"/><path d="M749 942 l27 -6 l5 4 l-2 24 l-27 3 l-3 -3z" fill="#1f63c8" stroke="#103c90" stroke-width=".8"/><path d="M753 945 l20 -3 l1 19 l-20 2z" fill="#f2ecd2" stroke="#a09a80" stroke-width=".6"/><path d="M759 945 h11 v15 h-11z" fill="#d8e8f8" stroke="#6080a0" stroke-width=".6"/><path d="M762 956 l14 -8" stroke="#2a5ab0" stroke-width="1.6"/><circle cx="777" cy="947" r="2" fill="#e02020"/><path d="M750 1029 l3 -21 l6 -3 h20 l-2 24z" fill="#e2bf56" stroke="#8a6a20" stroke-width=".8"/><path d="M757 1004 h13 l4 4 v14 h-17z" fill="#e8eef8" stroke="#7a8aa0" stroke-width=".7"/><path d="M751 1031 l6 -18 l22 -4 l-3 22z" fill="#f09a1c" stroke="#9a5a10" stroke-width=".7"/><path d="M765 1031 v-12" stroke="#202020" stroke-width="1.6"/><rect x="837.5" y="674.5" width="120" height="279" fill="#f6f6f4" stroke="#7f9db9"/><rect x="838" y="676" width="112" height="21" fill="#ebeadb" /><rect x="838" y="695" width="112" height="2" fill="#d6d2c2" /><path d="M887 693 l4.5 -5 l4.5 5z" fill="#aca899"/><path d="M843.5 712.5 v-9 q0 -2 2 -2 h4 l2 2 h6 q2 0 2 2 v7 q0 2 -2 2 h-12 q-2 0 -2 -2z" fill="url(#fold)" stroke="#9a7418" stroke-width="1"/><path d="M844 706.5 h15" stroke="#fff4b0" stroke-width="1"/><path d="M843.5 730.0 v-9 q0 -2 2 -2 h4 l2 2 h6 q2 0 2 2 v7 q0 2 -2 2 h-12 q-2 0 -2 -2z" fill="url(#fold)" stroke="#9a7418" stroke-width="1"/><path d="M844 724.0 h15" stroke="#fff4b0" stroke-width="1"/><path d="M843.5 747.5 v-9 q0 -2 2 -2 h4 l2 2 h6 q2 0 2 2 v7 q0 2 -2 2 h-12 q-2 0 -2 -2z" fill="url(#fold)" stroke="#9a7418" stroke-width="1"/><path d="M844 741.5 h15" stroke="#fff4b0" stroke-width="1"/><rect x="843" y="753.5" width="13" height="13" rx="1.5" fill="#d0d0d0" stroke="#606060" stroke-width=".8"/><rect x="845.5" y="755.5" width="13" height="13" rx="2" fill="#1a70b8" stroke="#303848" stroke-width="1"/><path d="M852 757.5v9 M847.5 762.0h9" stroke="#e8f4ff" stroke-width="1.1"/><circle cx="852" cy="762.0" r="1.6" fill="#fff"/><rect x="843" y="771" width="13" height="13" rx="1.5" fill="#d0d0d0" stroke="#606060" stroke-width=".8"/><rect x="845.5" y="773" width="13" height="13" rx="2" fill="#1a70b8" stroke="#303848" stroke-width="1"/><path d="M852 775v9 M847.5 779.5h9" stroke="#e8f4ff" stroke-width="1.1"/><circle cx="852" cy="779.5" r="1.6" fill="#fff"/><rect x="843" y="788.5" width="13" height="13" rx="1.5" fill="#d0d0d0" stroke="#606060" stroke-width=".8"/><rect x="845.5" y="790.5" width="13" height="13" rx="2" fill="#1a70b8" stroke="#303848" stroke-width="1"/><path d="M852 792.5v9 M847.5 797.0h9" stroke="#e8f4ff" stroke-width="1.1"/><circle cx="852" cy="797.0" r="1.6" fill="#fff"/><rect x="838" y="935" width="112" height="17" fill="#f2f4f8" /><rect x="838.5" y="935.5" width="16" height="16" rx="2" fill="#c8d8f8" stroke="#b0c4ec"/><path d="M849 939.5 l-4 4 l4 4" fill="none" stroke="#4d6185" stroke-width="1.8"/><rect x="857.5" y="935.5" width="100" height="16" rx="2" fill="#c0d2f6" stroke="#b8caf0"/><path d="M923 940v7M926 940v7M929 940v7" stroke="#9fb4e0"/><rect x="918.5" y="964.5" width="13" height="13" fill="#f4f4f0" stroke="#1c5180"/><rect x="918.5" y="984.5" width="40" height="21" fill="#fff" stroke="#7f9db9"/><rect x="918.5" y="1015.5" width="40" height="21" fill="#fff" stroke="#7f9db9"/><rect x="919.5" y="1036.5" width="40" height="91" fill="#fff" stroke="#000"/><rect x="920" y="1114.5" width="30" height="12.5" fill="#316ac5" /><rect x="200" y="1150" width="750" height="15" fill="#ece9d8" /><rect x="201.5" y="1150.5" width="18" height="14" fill="#ece9d8" stroke="#c4c1b0" stroke-width="1"/><path d="M202 1164 v-13 h17" fill="none" stroke="#fff"/><rect x="220.5" y="1150.5" width="18" height="14" fill="#ece9d8" stroke="#c4c1b0" stroke-width="1"/><path d="M221 1164 v-13 h17" fill="none" stroke="#fff"/><rect x="239.5" y="1150.5" width="18" height="14" fill="#ece9d8" stroke="#c4c1b0" stroke-width="1"/><path d="M240 1164 v-13 h17" fill="none" stroke="#fff"/><rect x="258.5" y="1150.5" width="18" height="14" fill="#ece9d8" stroke="#c4c1b0" stroke-width="1"/><path d="M259 1164 v-13 h17" fill="none" stroke="#fff"/><path d="M206 1153v9M216 1153 l-7 4.5 l7 4.5z" fill="#000" stroke="#000" stroke-width="1.2"/><path d="M232 1153 l-7 4.5 l7 4.5z" fill="#000"/><path d="M245 1153 l7 4.5 l-7 4.5z" fill="#000"/><path d="M262 1153 l7 4.5 l-7 4.5z M271 1153v9" fill="#000" stroke="#000" stroke-width="1.2"/><path d="M280.5 1150 L286 1164.5 H318 L322 1150z" fill="#000"/><path d="M322 1150 L324.5 1164 H363 L367.5 1150" fill="#ece9d8" stroke="#202020" stroke-width="1"/><rect x="143" y="1165" width="807" height="6" fill="#ece9d8" /><rect x="143" y="1171" width="807" height="1" fill="#9d9a8a" /><rect x="143" y="1172" width="807" height="2" fill="#303030" /><rect x="143" y="1174" width="807" height="3" fill="#f4f2ea" /><rect x="149" y="1181" width="8" height="66" fill="#f8f7f2" /><rect x="149.5" y="1181.5" width="3" height="65" fill="#fff" stroke="#c4c1b0"/><rect x="153.5" y="1181.5" width="3" height="65" fill="#fff" stroke="#c4c1b0"/><rect x="161" y="1178" width="789" height="72" fill="#fff"/><path d="M161.5 1250 V1178.5 H950" fill="none" stroke="#404040" stroke-width="2"/><rect x="162" y="1233" width="788" height="1.5" fill="#b8b8b8" /><rect x="143" y="1250" width="807" height="4" fill="#ece9d8" /><rect x="143" y="1254" width="807" height="23" fill="#ece9d8" /><rect x="143" y="1254" width="807" height="1.2" fill="#bdbaa8" /><rect x="143" y="1255.2" width="807" height="1" fill="#f8f7f0" /><rect x="258.5" y="1257.5" width="266" height="19" fill="#ece9d8" stroke="#aca899"/><rect x="529.5" y="1258.5" width="29" height="18" fill="#ece9d8"/><path d="M529.5 1276.5 v-18 h29" fill="none" stroke="#fff"/><path d="M529.5 1276.5 h29 v-18" fill="none" stroke="#aca899"/><rect x="563.5" y="1258.5" width="29" height="18" fill="#ece9d8"/><path d="M563.5 1276.5 v-18 h29" fill="none" stroke="#fff"/><path d="M563.5 1276.5 h29 v-18" fill="none" stroke="#aca899"/><rect x="597.5" y="1258.5" width="29" height="18" fill="#ece9d8"/><path d="M597.5 1276.5 v-18 h29" fill="none" stroke="#fff"/><path d="M597.5 1276.5 h29 v-18" fill="none" stroke="#aca899"/><rect x="632.5" y="1258.5" width="29" height="18" fill="#ece9d8"/><path d="M632.5 1276.5 v-18 h29" fill="none" stroke="#fff"/><path d="M632.5 1276.5 h29 v-18" fill="none" stroke="#aca899"/><rect x="666.5" y="1258.5" width="55" height="18" fill="#f4f3ee" stroke="#7a7866"/><path d="M667 1276 h55 v-17" fill="none" stroke="#fff"/><rect x="725.5" y="1258.5" width="55" height="18" fill="#f4f3ee" stroke="#7a7866"/><path d="M726 1276 h55 v-17" fill="none" stroke="#fff"/><rect x="785.5" y="1258.5" width="23" height="18" fill="#ece9d8"/><path d="M785.5 1276.5 v-18 h23" fill="none" stroke="#fff"/><path d="M785.5 1276.5 h23 v-18" fill="none" stroke="#aca899"/><rect x="813.5" y="1258.5" width="29" height="18" fill="#ece9d8"/><path d="M813.5 1276.5 v-18 h29" fill="none" stroke="#fff"/><path d="M813.5 1276.5 h29 v-18" fill="none" stroke="#aca899"/><rect x="847.5" y="1258.5" width="30" height="18" fill="#f4f3ee" stroke="#7a7866"/><path d="M848 1276 h30 v-17" fill="none" stroke="#fff"/><rect x="143" y="1277" width="807" height="33" fill="url(#tk)" /><path d="M143 1278 H236 q10 0 10 15 q0 16 -10 16 H143z" fill="url(#st)"/><path d="M244 1281 q4 12 0 25" fill="none" stroke="#1c5a1c" stroke-width="1.5"/><path d="M157 1283 q4 -1 8 1 l-1 8 q-4 -2 -8 -1z" fill="#f4501c"/><path d="M166 1284 q4 1 8 0 l-1 8 q-4 1 -8 0z" fill="#6cc83a"/><path d="M155 1292 q4 -1 8 1 l-1 8 q-4 -2 -8 -1z" fill="#2f86f0"/><path d="M164 1293 q4 1 8 0 l-1 8 q-4 1 -8 0z" fill="#fcc418"/><path d="M261 1290 l10 -3 l4 4 l-2 9 l-10 2 l-3 -4z" fill="#e8f0fc" stroke="#2a5ab0" stroke-width="1.2"/><path d="M264 1294 h7 M264 1294 q1 -4 4 -3 q3 1 2 3 M264 1294 q0 4 4 4 q2 0 3 -1" fill="none" stroke="#2a6ad0" stroke-width="1.4"/><circle cx="274" cy="1289" r="1.5" fill="#e04040"/><path d="M321 1291 h8.5 l-4.25 4.5z M370.5 1291 h8.5 l-4.25 4.5z" fill="#fff"/><rect x="384" y="1286" width="15" height="15" fill="#3a9a3a" stroke="#a8e0a8" stroke-width=".6"/><path d="M387 1290h9M387 1293.5h9M387 1297h9M391.5 1288v11" stroke="#e0ffe0" stroke-width=".8"/><path d="M409 1286 l3.5 3 l-3.5 3 M413.5 1286 l3.5 3 l-3.5 3" fill="none" stroke="#a8c8ff" stroke-width="1.1"/><rect x="430.5" y="1280.5" width="148" height="26" rx="3" fill="url(#tbtn)" stroke="#1a4fc0"/><rect x="580.5" y="1280.5" width="148" height="26" rx="3" fill="url(#tbtn)" stroke="#1a4fc0"/><rect x="732.5" y="1280.5" width="148" height="26" rx="3" fill="url(#tbtn)" stroke="#1a4fc0"/><rect x="883.5" y="1280.5" width="77" height="26" rx="3" fill="url(#tbtn)" stroke="#1a4fc0"/><path d="M440 1300 v-11 h6 l2 2 h7 v9z" fill="#f2d36c" stroke="#9a7a30" stroke-width=".8"/><rect x="444" y="1288" width="9" height="7" fill="#e0e8f0"/><path d="M592 1300 v-11 h6 l2 2 h7 v9z" fill="#f2d36c" stroke="#9a7a30" stroke-width=".8"/><rect x="596" y="1288" width="9" height="7" fill="#e0e8f0"/><rect x="741" y="1285" width="13" height="15" fill="#fff" stroke="#5a6a80"/><rect x="738" y="1287" width="8" height="8" fill="#2a5ab0"/><rect x="892" y="1285" width="13" height="15" fill="#fff" stroke="#5a6a80"/><rect x="889" y="1287" width="8" height="8" fill="#2a5ab0"/>
</svg>
<div class="t" style="left:742px;top:616px;font-size:14.5px;line-height:16px;color:#fff;font-weight:bold;letter-spacing:.1px;text-shadow:1px 1px 0 #0a2a80">图形另存为</div><div class="t" style="left:761px;top:650px;font-size:13px;line-height:16px;color:#101010">保存于 (<u>I</u>):</div><div class="t" style="left:860px;top:652px;font-size:13.5px;line-height:16px;color:#000">小区</div><div class="t" style="left:722px;width:81px;text-align:center;top:722px;font-size:12.5px;line-height:14px;color:#fff">历史记录</div><div class="t" style="left:722px;width:81px;text-align:center;top:786px;font-size:12.5px;line-height:14px;color:#fff">我的文档</div><div class="t" style="left:722px;width:81px;text-align:center;top:850px;font-size:12.5px;line-height:14px;color:#fff">收藏夹</div><div class="t" style="left:722px;width:81px;text-align:center;top:977px;font-size:12.5px;line-height:14px;color:#fff">桌面</div><div class="t" style="left:722px;width:81px;text-align:center;top:914px;font-size:12.5px;line-height:14px;color:#fff;letter-spacing:.6px">FTP</div><div class="t" style="left:851px;top:679px;font-size:13px;line-height:15px;color:#000">名称</div><div class="t" style="left:861px;top:702px;font-size:11px;line-height:12px;color:#000;letter-spacing:-.3px">nw</div><div class="t" style="left:862px;top:718.5px;font-size:13px;line-height:15px;color:#000">纪家庙项目交通</div><div class="t" style="left:862px;top:736px;font-size:13px;line-height:15px;color:#000">说明</div><div class="t" style="left:862px;top:753.5px;font-size:13px;line-height:15px;color:#000">1</div><div class="t" style="left:862px;top:771px;font-size:13px;line-height:15px;color:#000">2</div><div class="t" style="left:862px;top:788.5px;font-size:13px;line-height:15px;color:#000">纪家庙</div><div class="t" style="left:936px;top:963px;font-size:13.5px;line-height:16px;color:#000">立即</div><div class="t" style="left:838px;top:986px;font-size:13px;line-height:16px;color:#101010">文件名 (<u>N</u>):</div><div class="t" style="left:921px;top:987px;font-size:12.5px;line-height:15px;color:#000;font-family:'Liberation Mono'">2.dwg</div><div class="t" style="left:838px;top:1017px;font-size:13px;line-height:16px;color:#101010">文件类型 (<u>T</u>):</div><div class="t" style="left:922px;top:1019px;font-size:11.5px;line-height:14px;color:#000;font-family:'Liberation Mono';letter-spacing:-.5px">AutoC</div><div class="t" style="left:921px;top:1036px;font-size:11.5px;line-height:13px;color:#000;font-family:'Liberation Mono';letter-spacing:-.5px">AutoC</div><div class="t" style="left:921px;top:1049px;font-size:11.5px;line-height:13px;color:#000;font-family:'Liberation Mono';letter-spacing:-.5px">AutoC</div><div class="t" style="left:921px;top:1062px;font-size:11.5px;line-height:13px;color:#000;font-family:'Liberation Mono';letter-spacing:-.5px">AutoC</div><div class="t" style="left:921px;top:1075px;font-size:11.5px;line-height:13px;color:#000;font-family:'Liberation Mono';letter-spacing:-.5px">AutoC</div><div class="t" style="left:921px;top:1088px;font-size:11.5px;line-height:13px;color:#000;font-family:'Liberation Mono';letter-spacing:-.5px">AutoC</div><div class="t" style="left:921px;top:1101px;font-size:11.5px;line-height:13px;color:#000;font-family:'Liberation Mono';letter-spacing:-.5px">AutoC</div><div class="t" style="left:921px;top:1114px;font-size:11.5px;line-height:13px;color:#fff;font-family:'Liberation Mono';letter-spacing:-.5px">AutoC</div><div class="t" style="left:289px;top:1151px;font-size:12.5px;line-height:14px;color:#fff;letter-spacing:-.5px">模型</div><div class="t" style="left:327px;top:1151px;font-size:12.5px;line-height:14px;color:#000;letter-spacing:-.5px">布局<span style="font-family:'Liberation Sans'">1</span></div><div class="t" style="left:163.5px;top:1180.5px;font-size:13px;line-height:13px;color:#000">命</div><div class="t" style="left:180.5px;top:1180.5px;font-size:13px;line-height:13px;color:#000">令</div><div class="t" style="left:197px;top:1180.5px;font-size:13px;line-height:13px;color:#555">:</div><div class="t" style="left:163.5px;top:1194.7px;font-size:13px;line-height:13px;color:#000">命</div><div class="t" style="left:180.5px;top:1194.7px;font-size:13px;line-height:13px;color:#000">令</div><div class="t" style="left:197px;top:1194.7px;font-size:13px;line-height:13px;color:#555">:</div><div class="t" style="left:163.5px;top:1208.9px;font-size:13px;line-height:13px;color:#000">命</div><div class="t" style="left:180.5px;top:1208.9px;font-size:13px;line-height:13px;color:#000">令</div><div class="t" style="left:197px;top:1208.9px;font-size:13px;line-height:13px;color:#555">:</div><div class="t" style="left:213px;top:1180px;font-size:14px;line-height:15px;color:#000;font-family:'Liberation Sans';letter-spacing:1.1px">_saveas</div><div class="t" style="left:149px;top:1262px;font-size:12.5px;line-height:14px;color:#000;letter-spacing:-.1px">※11年07月21日※</div><div class="t" style="left:262px;top:1261.5px;font-size:11.8px;line-height:14px;color:#000;font-family:'Liberation Mono';letter-spacing:-.75px">498989.3923,  296866.2074,  0.0000</div><div class="t" style="left:531px;top:1260px;font-size:13px;line-height:15px;color:#000;letter-spacing:.3px">捕捉</div><div class="t" style="left:565px;top:1260px;font-size:13px;line-height:15px;color:#000;letter-spacing:.3px">栅格</div><div class="t" style="left:599px;top:1260px;font-size:13px;line-height:15px;color:#000;letter-spacing:.3px">正交</div><div class="t" style="left:634px;top:1260px;font-size:13px;line-height:15px;color:#000;letter-spacing:.3px">极轴</div><div class="t" style="left:668px;top:1260px;font-size:13px;line-height:15px;color:#000;letter-spacing:.3px">对象捕捉</div><div class="t" style="left:727px;top:1260px;font-size:13px;line-height:15px;color:#000;letter-spacing:.3px">对象追踪</div><div class="t" style="left:787px;top:1261px;font-size:11px;line-height:13px;color:#000;font-family:'Liberation Mono';letter-spacing:-.6px">DYN</div><div class="t" style="left:815px;top:1260px;font-size:13px;line-height:15px;color:#000;letter-spacing:.3px">线宽</div><div class="t" style="left:849px;top:1260px;font-size:13px;line-height:15px;color:#000;letter-spacing:.3px">模型</div><div class="t" style="left:180px;top:1281px;font-size:19px;line-height:22px;color:#fff;font-style:italic;text-shadow:1px 1px 1px #205020">开始</div><div class="t" style="left:288px;top:1285px;font-size:13px;line-height:15px;color:#fff">网络</div><div class="t" style="left:338px;top:1285px;font-size:13px;line-height:15px;color:#fff">工具</div><div class="t" style="left:458px;top:1287px;font-size:11.5px;line-height:14px;color:#fff;font-family:'Liberation Mono';letter-spacing:-.7px">PPT07.17</div><div class="t" style="left:611px;top:1286px;font-size:13px;line-height:15px;color:#fff">小区</div><div class="t" style="left:761px;top:1286px;font-size:13px;line-height:15px;color:#fff">京原路7好养老...</div><div class="t" style="left:912px;top:1286px;font-size:13px;line-height:15px;color:#fff">说明 -</div><div class="t" style="left:167px;top:396px;font-size:13px;line-height:14px;color:#f4f8ff;font-weight:bold;font-family:'Liberation Mono';letter-spacing:.45px">AutoCAD 2006 - [F:\<span style="font-family:'Liberation Serif';font-size:14px;letter-spacing:2.4px">刘环宇</span>\<span style="font-family:'Liberation Serif';font-size:14px;letter-spacing:2.4px">小区</span>\2.dxf]</div><div class="t" style="left:172px;top:421px;font-size:12.5px;line-height:15px;color:#9a9a9a">文件<span style="font-family:'Liberation Mono';font-size:11px;letter-spacing:-1.2px">(<u>F</u>)</span></div><div class="t" style="left:229px;top:421px;font-size:12.5px;line-height:15px;color:#9a9a9a">编辑<span style="font-family:'Liberation Mono';font-size:11px;letter-spacing:-1.2px">(<u>E</u>)</span></div><div class="t" style="left:287px;top:421px;font-size:12.5px;line-height:15px;color:#9a9a9a">视图<span style="font-family:'Liberation Mono';font-size:11px;letter-spacing:-1.2px">(<u>V</u>)</span></div><div class="t" style="left:344px;top:421px;font-size:12.5px;line-height:15px;color:#9a9a9a">插入<span style="font-family:'Liberation Mono';font-size:11px;letter-spacing:-1.2px">(<u>I</u>)</span></div><div class="t" style="left:401px;top:421px;font-size:12.5px;line-height:15px;color:#9a9a9a">格式<span style="font-family:'Liberation Mono';font-size:11px;letter-spacing:-1.2px">(<u>O</u>)</span></div><div class="t" style="left:459px;top:421px;font-size:12.5px;line-height:15px;color:#9a9a9a">工具<span style="font-family:'Liberation Mono';font-size:11px;letter-spacing:-1.2px">(<u>T</u>)</span></div><div class="t" style="left:516px;top:421px;font-size:12.5px;line-height:15px;color:#9a9a9a">绘图<span style="font-family:'Liberation Mono';font-size:11px;letter-spacing:-1.2px">(<u>D</u>)</span></div><div class="t" style="left:574px;top:421px;font-size:12.5px;line-height:15px;color:#9a9a9a">标注<span style="font-family:'Liberation Mono';font-size:11px;letter-spacing:-1.2px">(<u>N</u>)</span></div><div class="t" style="left:632px;top:421px;font-size:12.5px;line-height:15px;color:#9a9a9a">修改<span style="font-family:'Liberation Mono';font-size:11px;letter-spacing:-1.2px">(<u>M</u>)</span></div><div class="t" style="left:689px;top:421px;font-size:12.5px;line-height:15px;color:#9a9a9a">窗口<span style="font-family:'Liberation Mono';font-size:11px;letter-spacing:-1.2px">(<u>W</u>)</span></div><div class="t" style="left:747px;top:421px;font-size:12.5px;line-height:15px;color:#9a9a9a"><span style="font-family:'Liberation Mono';font-size:11.5px;letter-spacing:-.2px">Acrobat</span> 标记<span style="font-family:'Liberation Mono';font-size:11px;letter-spacing:-1.2px">(<u>C</u>)</span></div><div class="t" style="left:856px;top:421px;font-size:12.5px;line-height:15px;color:#9a9a9a"><span style="font-family:'Liberation Mono';font-size:11.5px;letter-spacing:-.2px">Adobe PDF</span><span style="font-family:'Liberation Mono';font-size:11px;letter-spacing:-1px">(<u>B</u>)</span></div><div class="t" style="left:941px;top:421px;font-size:12.5px;line-height:15px;color:#9a9a9a">帮</div>

<div class="t" style="left:180px;top:823px">将</div>
<div class="t" style="left:145px;top:873px">打开</div>
<div class="t" style="left:145px;top:923px">选小区</div>
<div class="t" style="left:145px;top:1022px">最后</div>

</body></html>
